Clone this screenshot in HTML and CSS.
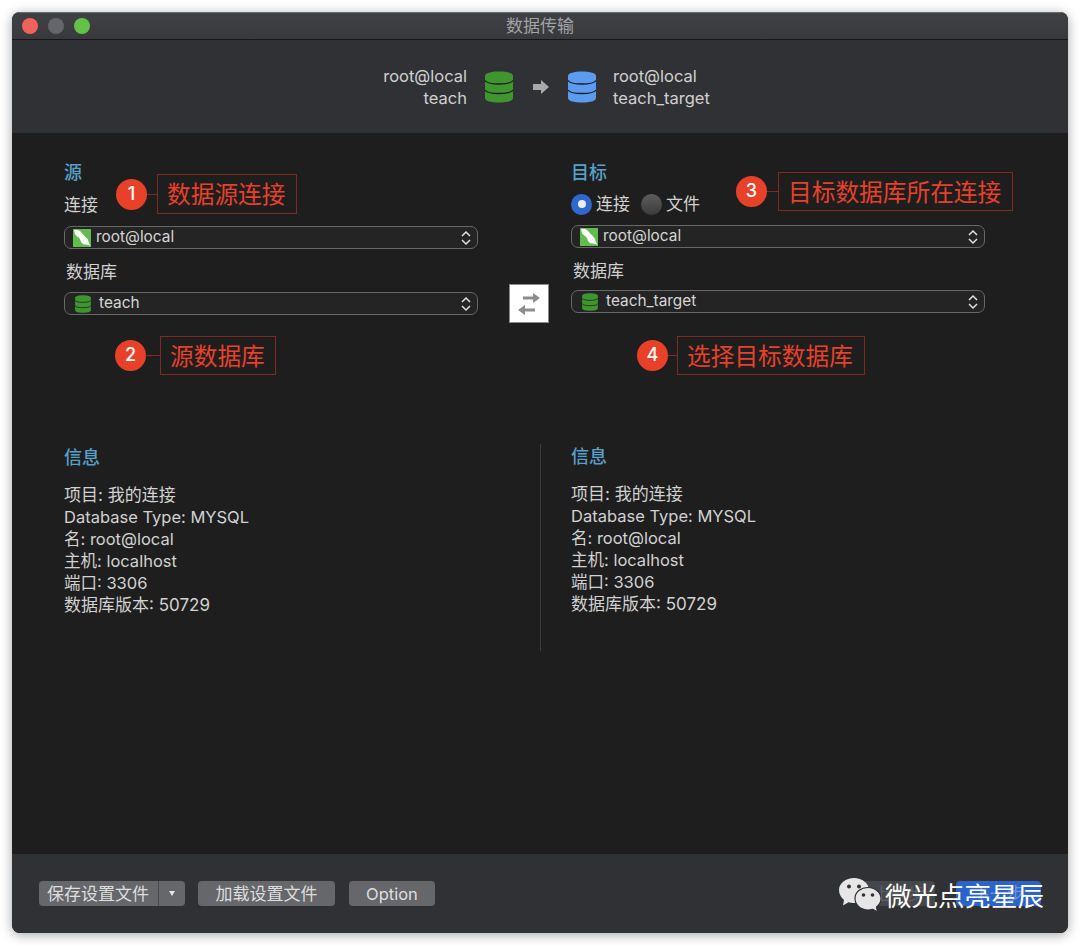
FILE: index.html
```html
<!DOCTYPE html>
<html lang="zh-CN">
<head>
  <meta charset="UTF-8" />
  <meta name="viewport" content="width=device-width, initial-scale=1.0"/>
  <title>数据传输</title>
  <link rel="stylesheet" href="styles.css">
</head>
<body>
  <svg class="defs" width="0" height="0">
    <symbol id="db" viewBox="0 0 28 32">
      <path fill="currentColor" d="M0 5C0 2 6 .5 14 .5S28 2 28 5v22c0 3-6 4.500-14 4.500S0 30 0 27z"/>
      <path fill="none" stroke="#1c1c1c" stroke-width="1.300" d="M0 9.500c2 3 8 3.500 14 3.500s12-.5 14-3.500M0 19c2 3 8 3.500 14 3.500s12-.5 14-3.500"/>
    </symbol>
    <symbol id="mysql" viewBox="0 0 18 18">
      <rect width="18" height="18" fill="#5fbe4c"/>
      <path fill="#fff" d="M1 1c3-.8 5.500.2 7 2 1.300 1.600 2.500 3 4.500 4.700 2 1.800 3 3.800 3.300 6l1.700 3-4.200-1.200c-2.300.4-4-.5-5-2.300C7.300 11 7 9.300 5 8 3.500 7 2 6 1.800 4.300z"/>
    </symbol>
    <symbol id="updown" viewBox="0 0 10 16">
      <path fill="none" stroke="#e2e2e2" stroke-width="1.500" d="M1 6l4-4 4 4M1 10l4 4 4-4"/>
    </symbol>
  </svg>

  <div class="window">
    <div class="titlebar">
      <div class="lights">
        <span class="light red"></span>
        <span class="light gray"></span>
        <span class="light green"></span>
      </div>
      <div class="title">数据传输</div>
    </div>

    <div class="summary">
      <div class="summary-text right">root@local<br>teach</div>
      <svg class="summary-db green-db"><use href="#db"/></svg>
      <svg class="summary-arrow" viewBox="0 0 16 14"><path fill="#a8a8a8" d="M0 4h8V0l8 7-8 7v-4H0z"/></svg>
      <svg class="summary-db blue-db"><use href="#db"/></svg>
      <div class="summary-text">root@local<br>teach_target</div>
    </div>

    <div class="main">
      <div class="pickers">
        <div class="panel">
          <div class="heading">源</div>
          <div class="label">连接</div>
          <div class="select first">
            <svg class="conn-icon"><use href="#mysql"/></svg>
            <span class="select-text">root@local</span>
            <svg class="chevrons"><use href="#updown"/></svg>
          </div>
          <div class="label indent">数据库</div>
          <div class="select second">
            <svg class="db-icon"><use href="#db"/></svg>
            <span class="select-text">teach</span>
            <svg class="chevrons"><use href="#updown"/></svg>
          </div>
        </div>

        <button class="swap">
          <svg viewBox="0 0 22 22" width="22" height="22"><path fill="#8c8c8c" d="M5 3.500h10V0l7 5-7 5V6.500H5zM17 15.500H7V12l-7 5 7 5v-3.500h10z"/></svg>
        </button>

        <div class="panel">
          <div class="heading">目标</div>
          <div class="radios">
            <span class="radio on"></span><span class="radio-text">连接</span>
            <span class="radio"></span><span class="radio-text">文件</span>
          </div>
          <div class="select first tight">
            <svg class="conn-icon"><use href="#mysql"/></svg>
            <span class="select-text">root@local</span>
            <svg class="chevrons"><use href="#updown"/></svg>
          </div>
          <div class="label indent">数据库</div>
          <div class="select second tighter">
            <svg class="db-icon"><use href="#db"/></svg>
            <span class="select-text">teach_target</span>
            <svg class="chevrons"><use href="#updown"/></svg>
          </div>
        </div>
      </div>

      <div class="infos">
        <div class="info">
          <div class="heading">信息</div>
          <div class="info-lines">
            <span class="wide">项目: 我的连接</span><br>
            Database Type: MYSQL<br>
            名: root@local<br>
            主机: localhost<br>
            端口: 3306<br>
            <span class="wide">数据库版本: 50729</span>
          </div>
        </div>
        <div class="info second-info">
          <div class="heading">信息</div>
          <div class="info-lines">
            <span class="wide">项目: 我的连接</span><br>
            Database Type: MYSQL<br>
            名: root@local<br>
            主机: localhost<br>
            端口: 3306<br>
            <span class="wide">数据库版本: 50729</span>
          </div>
        </div>
      </div>
    </div>

    <div class="footer">
      <div class="split-btn">
        <span class="split-main">保存设置文件</span>
        <span class="split-caret"></span>
      </div>
      <button class="btn load">加载设置文件</button>
      <button class="btn option">Option</button>
      <button class="btn back">上一步</button>
      <button class="btn next">下一步</button>
    </div>

    <!-- annotations drawn on top of the screenshot -->
    <div class="note note1"><span class="dot">1</span><span class="line"></span><span class="note-box">数据源连接</span></div>
    <div class="note note2"><span class="dot">2</span><span class="line"></span><span class="note-box">源数据库</span></div>
    <div class="note note3"><span class="dot">3</span><span class="line"></span><span class="note-box">目标数据库所在连接</span></div>
    <div class="note note4"><span class="dot">4</span><span class="line"></span><span class="note-box">选择目标数据库</span></div>

    <div class="watermark">
      <svg class="wechat" viewBox="0 0 42 36" width="42" height="36">
        <path fill="#e6e6e6" d="M15 0c8 0 15 5 15 12 0 7-7 13-15 13-2 0-4-.3-5.500-.8L4 27.500l1-5.500C2 19.500 0 16 0 12 0 5 7 0 15 0z"/>
        <circle cx="10" cy="8.500" r="2" fill="#303135"/>
        <circle cx="20" cy="8.500" r="2" fill="#303135"/>
        <path fill="#e6e6e6" stroke="#303135" stroke-width="1.200" d="M29 9.500c7 0 13 5 13 11 0 3.500-2 6.500-4.500 8.500l1 5-5-2.800c-1.500.5-3 .8-4.500.8-7 0-13-5-13-11.500s6-11 13-11z"/>
        <circle cx="24.500" cy="17" r="1.800" fill="#303135"/>
        <circle cx="33.500" cy="17" r="1.800" fill="#303135"/>
      </svg>
      <span class="wm-text">微光点亮星辰</span>
    </div>
  </div>
</body>
</html>
```

FILE: styles.css
```css
* {
  box-sizing: border-box;
}

body {
  margin: 0;
  padding: 12px;
  height: 945px;
  overflow: hidden;
  background: #ffffff;
  font-family: Inter, "Noto Sans CJK SC", sans-serif;
  font-size: 16.500px;
  line-height: 22px;
  color: #d2d2d2;
}

.defs {
  position: absolute;
}

.window {
  position: relative;
  width: 1056px;
  height: 921px;
  display: flex;
  flex-direction: column;
  border-radius: 8px;
  overflow: hidden;
  background: #1e1e1e;
  box-shadow: 0 2px 12px rgba(0, 0, 0, 0.35);
}

.titlebar {
  height: 28px;
  display: grid;
  grid-template-columns: 1fr auto 1fr;
  align-items: center;
  padding: 0 10px;
  background: linear-gradient(#404145, #38393d);
  border-top: 1px solid #6b6c70;
  border-bottom: 1px solid #17171a;
}

.lights {
  display: flex;
  gap: 10px;
}

.light {
  width: 16px;
  height: 16px;
  border-radius: 50%;
}

.red { background: #f3625a; }
.gray { background: #65666b; }
.green { background: #63c148; }

.title {
  color: #a3a3a6;
  font-size: 17px;
}

.summary {
  height: 93px;
  display: flex;
  align-items: center;
  justify-content: center;
  padding-left: 13px;
  background: #303135;
}

.summary-text {
  color: #d0d0d0;
}

.summary-text.right {
  text-align: right;
}

.summary-db {
  width: 28px;
  height: 32px;
  margin: 0 17px;
}

.green-db {
  color: #3f962e;
  margin-left: 18px;
}

.blue-db {
  color: #5b9bf0;
}

.summary-arrow {
  width: 16px;
  height: 14px;
  margin: 0 2px 0 3px;
}

.main {
  flex: 1;
  padding: 28px 0 0 52px;
}

.pickers {
  display: grid;
  grid-template-columns: 414px 93px 414px;
  height: 154px;
}

.heading {
  height: 22px;
  color: #58a0cc;
  font-size: 18px;
  font-weight: 500;
  line-height: 24px;
}

.label {
  height: 22px;
  margin-top: 10px;
  font-size: 17px;
  line-height: 24px;
}

.label.indent {
  margin: 11px 0 0 2px;
}

.select {
  height: 23px;
  display: flex;
  align-items: center;
  border: 1px solid #66676a;
  border-radius: 7px;
  color: #d6d6d6;
  background: #242424;
}

.select.first {
  margin-top: 11px;
  padding-left: 8px;
}

.select.second {
  margin-top: 10px;
  padding-left: 10px;
}

.select.tight { margin-top: 10px; }
.select.tighter { margin-top: 9px; }

.select-text {
  margin-bottom: 2px;
  font-size: 15.400px;
}

.conn-icon {
  width: 18px;
  height: 18px;
  margin-right: 5px;
}

.db-icon {
  width: 16px;
  height: 18px;
  margin-right: 8px;
  color: #3f962e;
}

.chevrons {
  width: 10px;
  height: 16px;
  margin: 0 6px 0 auto;
}

.swap {
  justify-self: start;
  align-self: start;
  width: 40px;
  height: 39px;
  margin: 123px 0 0 31px;
  padding: 0;
  display: flex;
  align-items: center;
  justify-content: center;
  background: #ffffff;
  border: 1px solid #8a8a8a;
}

.radios {
  display: flex;
  align-items: center;
  height: 22px;
  margin-top: 10px;
}

.radio {
  width: 21px;
  height: 21px;
  border-radius: 50%;
  background: linear-gradient(#5d5d5d, #3b3b3b);
  display: flex;
  align-items: center;
  justify-content: center;
}

.radio.on {
  background: #2f69cf;
}

.radio.on::after {
  content: "";
  width: 8px;
  height: 8px;
  border-radius: 50%;
  background: #e8eefa;
}

.radio-text {
  margin: 0 11px 0 4px;
  font-size: 17px;
  line-height: 24px;
}

.infos {
  display: grid;
  grid-template-columns: 476px 1fr;
  margin-top: 129px;
}

.info {
  height: 207px;
  padding-top: 2px;
}

.second-info {
  padding: 1px 0 0 30px;
  border-left: 1px solid #3c3c3e;
}

.info-lines {
  margin-top: 16px;
}

.wide {
  font-size: 17px;
}

.footer {
  height: 79px;
  display: flex;
  align-items: flex-start;
  padding: 27px 27px 0;
  background: #303135;
}

.split-btn {
  width: 146px;
  height: 25px;
  display: flex;
  border-radius: 4px;
  overflow: hidden;
  background: #66676b;
  color: #dedede;
  font-size: 17px;
  line-height: 27px;
}

.split-main {
  width: 120px;
  padding-left: 8px;
  border-right: 1px solid #48494d;
  white-space: nowrap;
}

.split-caret {
  flex: 1;
  display: flex;
  align-items: center;
  justify-content: center;
}

.split-caret::after {
  content: "";
  border-left: 3px solid transparent;
  border-right: 3px solid transparent;
  border-top: 5px solid #e6e6e6;
}

.btn {
  height: 25px;
  padding: 2px 0 0;
  border: none;
  border-radius: 4px;
  background: #66676b;
  color: #dedede;
  font: inherit;
  font-size: 17px;
  line-height: 23px;
}

.load {
  width: 137px;
  margin-left: 13px;
}

.option {
  width: 86px;
  margin-left: 14px;
  font-size: 16.500px;
}

.back {
  width: 72px;
  margin-left: auto;
  background: #46474b;
  color: #5e5f63;
}

.next {
  width: 85px;
  margin-left: 21px;
  background: #2b63c8;
  color: #6f93d8;
}

.note {
  position: absolute;
  display: flex;
  align-items: center;
}

.note1 { left: 104px; top: 162px; }
.note2 { left: 103px; top: 324px; }
.note3 { left: 724px; top: 160px; }
.note4 { left: 625px; top: 324px; }

.dot {
  width: 31px;
  height: 31px;
  border-radius: 50%;
  background: #e8412a;
  color: #ffffff;
  font-size: 18px;
  font-weight: 500;
  line-height: 29px;
  text-align: center;
}

.line {
  width: 10px;
  height: 1px;
  background: #7c2d22;
}

.note2 .line {
  width: 14px;
}

.note3 .line {
  width: 11px;
}

.note4 .line {
  width: 9px;
}

.note-box {
  padding: 0 10px 0 9px;
  height: 39px;
  border: 1px solid #7c2d22;
  color: #e8412a;
  font-size: 23.700px;
  line-height: 39px;
  white-space: nowrap;
}

.note1 .note-box {
  height: 40px;
  padding-right: 11px;
}

.note3 .note-box {
  padding-right: 11px;
}

.note4 .note-box {
  padding-right: 11px;
}

.watermark {
  position: absolute;
  left: 827px;
  top: 866px;
  display: flex;
  align-items: center;
}

.wm-text {
  margin-left: 4px;
  color: #ffffff;
  font-size: 26.500px;
  line-height: 36px;
  white-space: nowrap;
}
```
